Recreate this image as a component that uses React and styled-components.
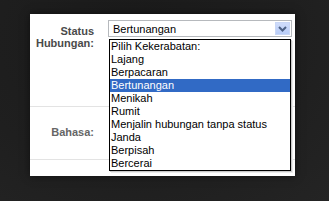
import React from "react";
import styled, { createGlobalStyle } from "styled-components";

const Global = createGlobalStyle`
  html, body { margin: 0; padding: 0; }
  body {
    width: 329px; height: 201px; overflow: hidden;
    background: radial-gradient(ellipse at 40% 20%, #1a1a1a 0%, #1f1f1f 60%, #242424 100%);
    font-family: "Liberation Sans", Arial, sans-serif;
  }
`;

const Stage = styled.div`
  padding: 14px 34px 0 30px;
`;

const Panel = styled.div`
  width: 265px;
  height: 162px;
  background: #fff;
  display: flex;
  flex-direction: column;
  box-shadow: 0 0 8px rgba(0,0,0,0.5);
`;

const Row = styled.div`
  display: grid;
  grid-template-columns: 78px 1fr;
  height: ${p => p.$h}px;
  border-bottom: ${p => (p.$line ? "1px solid #e3e3e3" : "none")};
  box-sizing: border-box;
`;

const Label = styled.div`
  text-align: right;
  padding-right: 14px;
  padding-top: ${p => p.$top}px;
  font-size: 11px;
  font-weight: bold;
  line-height: 12px;
  color: ${p => p.$color};
  display: flex;
  flex-direction: column;
  justify-content: ${p => (p.$center ? "center" : "flex-start")};
  padding-bottom: ${p => (p.$center ? "2px" : "0")};
`;

const Field = styled.div`
  padding-top: 6px;
  padding-right: 3px;
  position: relative;
`;

const Select = styled.div`
  height: 17px;
  border: 1px solid #b6b9bd;
  box-sizing: border-box;
  width: 184px;
  display: flex;
  align-items: center;
  justify-content: space-between;
  padding-left: 4px;
  padding-right: 1px;
  font-size: 11px;
  color: #000;
  position: relative;
`;

const ArrowBtn = styled.div`
  width: 15px;
  height: 13px;
  background: linear-gradient(#cfdcfb, #b9cdf7);
  border: 1px solid #c9d7f6;
  box-sizing: border-box;
  display: flex;
  align-items: center;
  justify-content: center;
`;

const List = styled.ul`
  position: absolute;
  left: 1px;
  top: 25px;
  width: 182px;
  margin: 0;
  padding: 0;
  list-style: none;
  border: 1px solid #000;
  background: #fff;
  box-sizing: border-box;
  box-shadow: 1px 1px 0 #c8c8c8, 2px 2px 0 #ececec;
  z-index: 2;
`;

const Item = styled.li`
  height: 13px;
  line-height: 13px;
  padding-left: 1px;
  font-size: 11px;
  white-space: nowrap;
  background: ${p => (p.$active ? "#316ac5" : "transparent")};
  color: ${p => (p.$active ? "#fff" : "#000")};
`;

const options = [
  "Pilih Kekerabatan:",
  "Lajang",
  "Berpacaran",
  "Bertunangan",
  "Menikah",
  "Rumit",
  "Menjalin hubungan tanpa status",
  "Janda",
  "Berpisah",
  "Bercerai",
];

export default function App() {
  return (
    <>
      <Global />
      <Stage>
        <Panel>
          <Row $h={93} $line>
            <Label $top={11} $color="#4a4a4a">
              <span>Status</span>
              <span>Hubungan:</span>
            </Label>
            <Field>
              <Select>
                <span>Bertunangan</span>
                <ArrowBtn>
                  <svg width="9" height="6" viewBox="0 0 9 6">
                    <path d="M1 1 L4.5 4.5 L8 1" fill="none" stroke="#4d6185" strokeWidth="2" />
                  </svg>
                </ArrowBtn>
              </Select>
              <List>
                {options.map(o => (
                  <Item key={o} $active={o === "Bertunangan"}>{o}</Item>
                ))}
              </List>
            </Field>
          </Row>
          <Row $h={53} $line>
            <Label $center $color="#666">Bahasa:</Label>
            <div />
          </Row>
          <Row $h={16}>
            <div />
            <div />
          </Row>
        </Panel>
      </Stage>
    </>
  );
}
